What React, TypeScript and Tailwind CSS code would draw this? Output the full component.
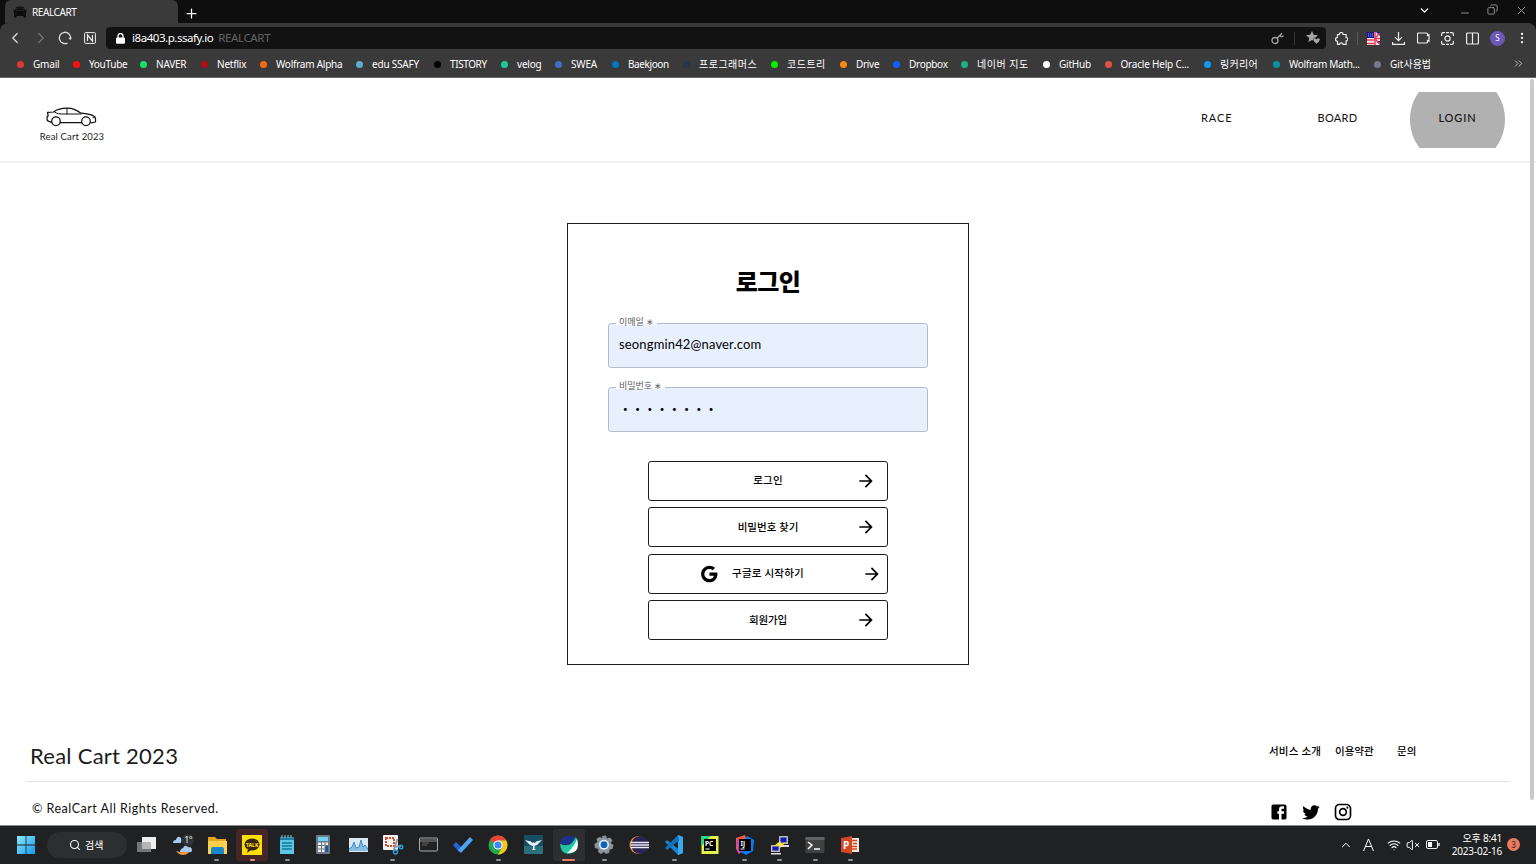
import React from "react";
import { ChevronLeft, ChevronRight, ChevronDown, ChevronUp, ChevronsRight, Copy, Minus, MoreVertical, Plus, Search, X, Wifi, VolumeX } from "lucide-react";

const ui = "font-['Noto_Sans','Noto_Sans_CJK_KR',sans-serif]";
const hand = "font-['Lato','Noto_Sans_CJK_KR',sans-serif]";

const bookmarks = [
  { name: "Gmail", dot: "bg-[#de3b30]", w: "w-[56px]", t: "tracking-[-0.2px]" },
  { name: "YouTube", dot: "bg-[#ff0c0c]", w: "w-[67px]", t: "tracking-[-0.3px]" },
  { name: "NAVER", dot: "bg-[#19e06a]", w: "w-[61px]", t: "tracking-[-0.2px]" },
  { name: "Netflix", dot: "bg-[#b20d14]", w: "w-[59px]", t: "tracking-[-0.2px]" },
  { name: "Wolfram Alpha", dot: "bg-[#f96a0a]", w: "w-[96px]", t: "tracking-[-0.25px]" },
  { name: "edu SSAFY", dot: "bg-[#5eadcf]", w: "w-[78px]", t: "tracking-[-0.2px]" },
  { name: "TISTORY", dot: "bg-black", w: "w-[67px]", t: "tracking-[-0.4px]" },
  { name: "velog", dot: "bg-[#20c997]", w: "w-[54px]", t: "tracking-[-0.2px]" },
  { name: "SWEA", dot: "bg-[#3f6fc4]", w: "w-[57px]", t: "tracking-[-0.2px]" },
  { name: "Baekjoon", dot: "bg-[#0076c0]", w: "w-[71px]", t: "tracking-[-0.4px]" },
  { name: "프로그래머스", dot: "bg-[#263747]", w: "w-[88px]", t: "tracking-[0.5px]" },
  { name: "코드트리", dot: "bg-[#02f202]", w: "w-[69px]", t: "tracking-[0.5px]" },
  { name: "Drive", dot: "bg-[#ff860d]", w: "w-[53px]", t: "tracking-[-0.3px]" },
  { name: "Dropbox", dot: "bg-[#0d61fe]", w: "w-[68px]", t: "tracking-[-0.3px]" },
  { name: "네이버 지도", dot: "bg-[#1bb184]", w: "w-[82px]", t: "tracking-[0.5px]" },
  { name: "GitHub", dot: "bg-white", w: "w-[61.5px]", t: "tracking-[-0.2px]" },
  { name: "Oracle Help C...", dot: "bg-[#e3523c]", w: "w-[99.5px]", t: "tracking-[-0.2px]" },
  { name: "링커리어", dot: "bg-[#0d97f8]", w: "w-[69px]", t: "tracking-[0.3px]" },
  { name: "Wolfram Math...", dot: "bg-[#0792a1]", w: "w-[101px]", t: "tracking-[-0.3px]" },
  { name: "Git사용법", dot: "bg-[#77768c]", w: "w-[70px]", t: "tracking-[0px]" },
];

function Car() {
  return (
    <svg className="h-[20px] w-[51px]" viewBox="0 0 51 20" fill="none" stroke="#111" strokeWidth="1.25" strokeLinejoin="round" strokeLinecap="round">
      <path d="M5.5 15.4 1.3 13.7 1 10l1.2-1.2-.7-3.4 6-.4C11 2.4 15 1.2 21 1.2c6.500 0 9.500 2 14 5 5 .5 10 1 12.800 2.800 1.700 1 2 3.200 1.700 6l-4.500.8M14.500 15.700h21" />
      <path d="M8.500 4.900C11 7 14 7 18 7h17M21 1.300V7M49 10l-2 .5" strokeWidth="1" />
      <circle cx="10" cy="14.200" r="4.300" /><circle cx="40" cy="14.200" r="4.300" />
    </svg>
  );
}

function Favicon() {
  return (
    <svg className="h-3 w-3.5" viewBox="0 0 14 12" fill="#0b0b0b">
      <path d="M3 1q4-1 8 0l1 3 1.500-.5v1.500L13 6v5.500h-2.500V10h-7v1.500H1V6L.5 5V3.500L2 4z" />
      <path d="M3.500 2h7l.7 2.500H2.800zM2 7l2 .5M12 7l-2 .5" stroke="#3f3f3f" strokeWidth=".5" />
    </svg>
  );
}

function BrowserChrome() {
  return (
    <header className={`flex h-[78px] shrink-0 flex-col bg-[#0e0e0e] text-white ${ui}`}>
      <div className="flex h-[23px] items-end pl-[5px]">
        <div className="flex h-[23px] w-[173px] items-center rounded-t-md bg-[#3a3a3a] pl-2">
          <Favicon />
          <span className="ml-[5px] text-[10px] leading-none tracking-[-0.4px]">REALCART</span>
        </div>
        <Plus className="mb-[2px] ml-[6px] size-[15px]" strokeWidth={2} />
        <div className="ml-auto flex h-[23px] items-start pr-[8px] pt-[4px] text-[#999]">
          <ChevronDown className="mr-[28px] size-[13px] text-white" strokeWidth={2.500} />
          <Minus className="mr-[16px] mt-[3px] size-[12px]" strokeWidth={1.800} />
          <Copy className="mr-[17px] size-[11px] -scale-x-100" strokeWidth={2} />
          <X className="size-[13px]" strokeWidth={1.700} />
        </div>
      </div>
      <div className="flex h-[55px] flex-col rounded-t-lg border-b border-[#666] bg-[#3a3a3a]">
        <div className="flex h-[30px] items-center pl-[6px]">
          <ChevronLeft className="size-[18px] text-[#ddd]" strokeWidth={1.600} />
          <ChevronRight className="ml-[8px] size-[18px] text-[#777]" strokeWidth={1.600} />
          <svg className="ml-[8px] size-[14px]" viewBox="0 0 14 14" fill="none" stroke="#ddd" strokeWidth="1.300"><path d="M9.500 12.100A5.700 5.700 0 1 1 12.700 7" /><path d="M10.300 6.800h3.700l-1.700 2.500z" fill="#ddd" stroke="none" /></svg>
          <svg className="ml-[12px] size-[12px]" viewBox="0 0 12 12" fill="none" stroke="#eee"><rect x=".6" y=".6" width="10.800" height="10.800" rx="1" /><path d="M3.500 9V3l5 6V3" strokeWidth="1.200" /></svg>
          <div className="ml-[10px] flex h-[22px] w-[1220px] items-center rounded-[4px] bg-[#121212] pl-[10px]">
            <svg className="h-[11px] w-[9px]" viewBox="0 0 9 11"><rect y="4.500" width="9" height="6.200" rx="1" fill="#fff" /><path d="M2 5V3a2.500 2.500 0 0 1 5 0v2" fill="none" stroke="#fff" strokeWidth="1.300" /></svg>
            <span className="ml-[7px] text-[11.500px] leading-none tracking-[-0.45px]">i8a403.p.ssafy.io</span>
            <span className="ml-[5px] text-[11.500px] leading-none tracking-[-0.35px] text-[#646464]">REALCART</span>
            <div className="ml-auto flex items-center pr-[6px] text-[#a5a5a5]">
              <svg className="size-[13px]" viewBox="0 0 13 13" fill="none" stroke="currentColor" strokeWidth="1.300"><circle cx="4" cy="8.500" r="3" /><path d="M6 6.300 11 1.200M9 3.200q1.500 3 3.500.5" /></svg>
              <span className="ml-[10px] h-[13px] w-px bg-[#333]" />
              <svg className="ml-[11px] size-[14px]" viewBox="0 0 14 14" fill="currentColor"><path d="m6 0 1.700 3.800 4.100.5-2 2.200q-3 .1-2.500 3.200L6 9l-3.600 2 .8-4L0 4.200l4.200-.4z" /><path d="M10.500 8.300q2.500-2 3.300 0 .3 2-3.300 4.400Q7.200 10.300 7.500 8.300q1-2 3 0z" /></svg>
            </div>
          </div>
          <svg className="ml-[9px] size-[13px]" viewBox="0 0 13 13" fill="none" stroke="#eee" strokeWidth="1.200"><path d="M2.500 2.500h2q0-2 1.800-2t1.800 2h3v3q0 0 .8.200 1 .5 1 1.500t-1 1.500q-.8.200-.8.200v3.500h-3q-.3-1.500-1.800-1.500t-1.800 1.500h-2v-3q-2-.3-2-2t2-2z" /></svg>
          <span className="ml-[9px] h-[13px] w-px bg-[#5a5a5a]" />
          <svg className="ml-[9px] size-[13px]" viewBox="0 0 13 13"><path fill="#f7e9ee" d="M0 0h13v13H0z" /><path fill="#18168f" d="M0 0h7v6H0zM9 0h4v4zM9 9h4v4z" /><path stroke="#e63c59" strokeWidth="1.500" d="M0 8h7M0 11.500h7M8 0v13M7 6.500h6M8 6l5-5M8 7l5 5" /><path stroke="#7aa6ee" strokeDasharray="1 1" d="M1 2h5M1 4h5" /></svg>
          <svg className="ml-[12px] size-[13px]" viewBox="0 0 13 13" fill="none" stroke="#eee" strokeWidth="1.200"><path d="M6.500 0v8.500M3 5.200l3.500 3.500L10 5.200M.6 10v2.400h11.800V10" /></svg>
          <svg className="ml-[12px] h-[12px] w-[13px]" viewBox="0 0 13 12" fill="none" stroke="#eee" strokeWidth="1.200"><path d="M1.500 1h8q1 0 1 1v1.500l1.500-.8v6.600l-1.500-.8V10q0 1-1 1h-8q-1 0-1-1V2q0-1 1-1z" /></svg>
          <svg className="ml-[11px] size-[13px]" viewBox="0 0 13 13" fill="none" stroke="#eee" strokeWidth="1.200"><path d="M.6 4V2q0-1.400 1.400-1.400h2M9 .6h2q1.400 0 1.400 1.400v2M12.400 9v2q0 1.400-1.400 1.400H9M4 12.400H2Q.6 12.400.6 11V9" /><circle cx="6.500" cy="6.500" r="2.600" /><path d="M5 .7h3M5 12.300h3" /></svg>
          <svg className="ml-[12px] size-[13px]" viewBox="0 0 13 13" fill="none" stroke="#eee" strokeWidth="1.200"><rect x=".6" y="1" width="11.800" height="11" rx="1" /><path d="M6.500 1v11" /></svg>
          <span className="ml-[11px] flex size-[15px] items-center justify-center rounded-full bg-[#6a58b8] text-[8px] leading-none">S</span>
          <MoreVertical className="ml-[10px] size-[14px] text-[#eee]" />
        </div>
        <nav className="flex h-[21px] items-center pl-[17px]">
          {bookmarks.map((b) => (
            <a key={b.name} className={`flex shrink-0 items-center whitespace-nowrap ${b.w}`}>
              <span className={`mt-px size-[7px] shrink-0 rounded-full ${b.dot}`} />
              <span className={`ml-[9px] text-[10px] leading-none ${b.t}`}>{b.name}</span>
            </a>
          ))}
          <ChevronsRight className="ml-auto mr-[11px] size-[13px] text-[#bbb]" strokeWidth={1.800} />
        </nav>
      </div>
    </header>
  );
}

function SiteHeader() {
  return (
    <div className="flex h-[85px] shrink-0 items-center justify-between border-b-2 border-[#eff1f1] pl-[40px] pr-[31px]">
      <div className="mt-[10px] flex w-[64px] flex-col items-center">
        <div className="flex -translate-x-px"><Car /></div>
        <span className="mt-1 whitespace-nowrap text-[9.500px] leading-[11px] tracking-[0.15px] text-[#222]">Real Cart 2023</span>
      </div>
      <nav className="flex h-[56px] items-center text-[11px] tracking-[0.900px] text-[#111]">
        <a className="mb-[2px] w-[116.500px]">RACE</a>
        <a className="mb-[2px] w-[92.500px] tracking-[0.3px]">BOARD</a>
        <a className="flex h-[56px] w-[95px] items-center justify-center overflow-hidden">
          <span className="flex size-[95px] shrink-0 items-center justify-center rounded-full bg-[#b1b1b1] pb-[2px] font-medium">LOGIN</span>
        </a>
      </nav>
    </div>
  );
}

function Field({ label, value, gap, mark }: { label: string; value: string; gap: string; mark: string }) {
  return (
    <label className="relative flex h-[45px] w-[320px] items-center rounded-[3px] border border-[#b1bccf] bg-[#e8f0fe] pl-[10px]">
      <span className={`absolute -top-[2px] left-[7px] h-[3px] bg-white ${gap}`} />
      <span className="absolute -top-[7px] left-[10px] flex gap-[2px] whitespace-nowrap text-[9px] leading-[10px] text-[#5c6067]">
        {label}
        <span>∗</span>
      </span>
      <span className={mark}>{value}</span>
    </label>
  );
}

function Arrow() {
  return <svg className="size-5" viewBox="0 0 24 24"><path d="m12 4-1.410 1.410L16.170 11H4v2h12.170l-5.580 5.590L12 20l8-8z" /></svg>;
}

const actions = [
  { text: "로그인", t: "tracking-[0.2px]" },
  { text: "비밀번호 찾기", t: "tracking-[0px]" },
  { text: "구글로 시작하기", t: "tracking-[0.2px]", google: true },
  { text: "회원가입", t: "tracking-[-0.1px]" },
];

function LoginCard() {
  return (
    <main className="mx-auto mt-[60px] flex h-[442px] w-[402px] shrink-0 flex-col items-center border border-[#1c1c1c] pt-[40px]">
      <h1 className="flex h-[36px] items-center text-[24px] font-black leading-none tracking-[-0.5px] text-black">로그인</h1>
      <div className="mt-[23px] flex flex-col gap-[19px] text-black">
        <Field label="이메일" value="seongmin42@naver.com" gap="w-[41px]" mark="pb-[1px] text-[13px] tracking-[0.15px]" />
        <Field label="비밀번호" value="••••••••" gap="w-[49px]" mark="pl-[4px] pb-[1px] text-[8px] tracking-[7.600px]" />
      </div>
      <div className="mt-[28.500px] flex flex-col gap-[6.500px] text-black">
        {actions.map((a) => (
          <button key={a.text} className="grid h-10 w-[240px] grid-cols-[52px_1fr_52px] items-center rounded-[3px] border border-[#1c1c1c] text-[10.500px] font-medium">
            <span className="flex justify-end">
              {a.google && <svg className="mr-[-18px] size-5 shrink-0" viewBox="0 0 24 24"><path d="M12.545 10.239v3.821h5.445c-.712 2.315-2.647 3.972-5.445 3.972a6.033 6.033 0 1 1 0-12.064c1.498 0 2.866.549 3.921 1.453l2.814-2.814A9.969 9.969 0 0 0 12.545 2C7.021 2 2.543 6.477 2.543 12s4.478 10 10.002 10c8.396 0 10.249-7.850 9.426-11.748z" /></svg>}
            </span>
            <span className={`text-center leading-none ${a.t}`}>{a.text}</span>
            <span className={a.google ? "flex justify-end pr-[5.500px]" : "flex justify-end pr-[11.500px]"}><Arrow /></span>
          </button>
        ))}
      </div>
    </main>
  );
}

function SiteFooter() {
  return (
    <footer className="mt-auto flex h-[89px] shrink-0 flex-col pl-[26px] pr-[26px] text-[#111]">
      <div className="flex h-[46px] items-center border-b border-[#e3e3e3] pb-[6px] pl-[4px]">
        <span className="whitespace-nowrap text-[22px] leading-none tracking-[0.25px] text-[#1c1c1c]">Real Cart 2023</span>
        <div className="ml-auto flex pb-[8px] text-[10.500px] font-medium leading-none text-black">
          <a className="w-[66px] tracking-[0.2px]">서비스 소개</a>
          <a className="w-[62px]">이용약관</a>
          <a className="w-[113px]">문의</a>
        </div>
      </div>
      <div className="flex items-center pl-[6px] pt-[14px]">
        <span className="pb-[1px] text-[12.500px] leading-[20px] tracking-[0.5px]">© RealCart All Rights Reserved.</span>
        <div className="ml-auto flex gap-[12px] pr-[157px] pt-[6px]">
          <svg className="size-5" viewBox="0 0 24 24"><path d="M5 3h14a2 2 0 0 1 2 2v14a2 2 0 0 1-2 2H5a2 2 0 0 1-2-2V5a2 2 0 0 1 2-2m13 2h-2.500A3.500 3.500 0 0 0 12 8.500V11h-2v3h2v7h3v-7h3v-3h-3V9a1 1 0 0 1 1-1h2V5z" /></svg>
          <svg className="size-5" viewBox="0 0 24 24"><path d="M22.460 6c-.77.35-1.600.58-2.460.69.88-.53 1.560-1.370 1.880-2.380-.83.5-1.750.85-2.720 1.050C18.370 4.500 17.260 4 16 4c-2.350 0-4.270 1.920-4.270 4.290 0 .34.04.67.11.98C8.280 9.090 5.110 7.380 3 4.790c-.37.63-.58 1.370-.58 2.150 0 1.490.75 2.810 1.910 3.560-.71 0-1.370-.2-1.950-.5v.03c0 2.080 1.480 3.820 3.440 4.210a4.220 4.220 0 0 1-1.930.07 4.280 4.280 0 0 0 4 2.980 8.521 8.521 0 0 1-5.330 1.840c-.34 0-.68-.02-1.020-.06C3.440 20.290 5.700 21 8.120 21 16 21 20.330 14.460 20.330 8.790c0-.19 0-.37-.01-.56.84-.6 1.560-1.360 2.140-2.230z" /></svg>
          <svg className="size-5" viewBox="0 0 24 24"><path d="M7.800 2h8.400C19.400 2 22 4.600 22 7.800v8.400a5.800 5.800 0 0 1-5.800 5.800H7.800C4.600 22 2 19.400 2 16.200V7.800A5.800 5.800 0 0 1 7.800 2m-.2 2A3.600 3.600 0 0 0 4 7.600v8.800C4 18.390 5.610 20 7.600 20h8.800a3.600 3.600 0 0 0 3.600-3.600V7.600C20 5.610 18.390 4 16.400 4H7.600m9.650 1.500a1.250 1.250 0 1 1 0 2.500 1.250 1.250 0 0 1 0-2.500M12 7a5 5 0 1 1 0 10 5 5 0 0 1 0-10m0 2a3 3 0 1 0 0 6 3 3 0 0 0 0-6z" /></svg>
        </div>
      </div>
    </footer>
  );
}

const label = "font-['Noto_Sans',sans-serif]";

const apps: { id: string; run?: "idle" | "hot" | "active"; art: React.ReactNode }[] = [
  { id: "views", art: <><path d="M0 7h14v10H0z" fill="#777" /><path d="M5 2h14v12H5z" fill="#eee" /><path d="M5 7h9v7H5z" fill="#b5b5b5" /></> },
  { id: "weather", art: <><path d="M8 17q8 1 11-6-1 9-8 9-4 0-7-4z" fill="#f0983a" /><path d="M1 8q0-3 3-3 1-4 4-3 2 1 1 6zM8 17q0-3 3-4 2-4 5-1 4 0 4 3t-3 2z" fill="#a9c8f2" /><circle cx="16" cy="5" r="6" fill="#303338" /><text x="12.500" y="8" fontSize="8" fill="#fff" className={label}>1°</text></> },
  { id: "files", run: "idle", art: <><path d="M1 2h7l2 2h9v14H1z" fill="#e6a51b" /><path d="M1 6h19v13H1z" fill="#ffd04d" /><path d="M4 19v-5q0-2 2-2h9q2 0 2 2v5z" fill="#1986c9" /></> },
  { id: "talk", run: "hot", art: <><path d="M0 0h20v20H0z" fill="#f9e000" /><ellipse cx="10" cy="9.500" rx="7.500" ry="6" fill="#3a2310" /><path d="m6 14-1 4 4-3z" fill="#3a2310" /><text x="4" y="11.500" fontSize="5" fontWeight="800" fill="#f9e000" className={label}>TALK</text></> },
  { id: "notes", run: "idle", art: <><path d="M3 2h14v17H3z" fill="#5cc8e4" /><path d="M3 2h14v3H3z" fill="#207ea3" /><path d="M5 8h10M5 11h10M5 14h10" stroke="#17799b" strokeWidth="1.400" /><path d="M5 0v3M8 0v3M11 0v3M14 0v3" stroke="#8ed3e5" /></> },
  { id: "calc", art: <><rect x="3" y="0" width="14" height="19" rx="1" fill="#6d7a85" /><path d="M5 2h10v4H5z" fill="#70d3f4" /><path d="M5 7.500h3V10H5zM9 7.500h2.500V10H9zM5 11h3v2.500H5zM9 11h2.500v2.500H9zM5 14.500h3V17H5zM9 14.500h2.500V17H9zM12.500 7.500H15V10h-2.500z" fill="#eee" /><path d="M12.500 11H15v6h-2.500z" fill="#1658a0" /></> },
  { id: "monitor", art: <><path d="M1 3h19v14H1z" fill="#dce9f3" /><path d="m1 14 3-2 2-5 2 6 3-1 2-7 2 7 2-2 3 4v2H1z" fill="#86bce0" /><path d="m1 14 3-2 2-5 2 6 3-1 2-7 2 7 2-2 3 4" fill="none" stroke="#3a8dc8" /></> },
  { id: "snip", run: "idle", art: <><rect x="0" y="0" width="15" height="15" rx="1" fill="#f2f2f2" /><path d="M3 3h8v8H3z" fill="none" stroke="#d64a31" strokeWidth="2" strokeDasharray="2 1" /><path d="m10.500 16 4-12M11 12l7-1" stroke="#999" strokeWidth="2" /><circle cx="12.500" cy="17" r="2" fill="none" stroke="#29a0dd" strokeWidth="1.500" /><circle cx="18" cy="12" r="1.800" fill="none" stroke="#29a0dd" strokeWidth="1.400" /></> },
  { id: "cmd", art: <><rect x="1.500" y="3" width="18" height="13" rx="1" fill="#222" stroke="#aaa" /><path d="M2 4h17v3H2z" fill="#555" /><path d="M4 8h7M4 10h5" stroke="#777" strokeWidth=".8" /></> },
  { id: "todo", art: <><path d="m0 10 3-3 6 6-3 4z" fill="#2564cf" /><path d="M5 15 17 2l3 3L8 18z" fill="#4aa5f2" /></> },
  { id: "chrome", run: "idle", art: <><circle cx="10" cy="10" r="9.500" fill="#22a753" /><path d="M10 10 1.800 5.300A9.500 9.500 0 0 1 18.300 5.500H10z" fill="#e94335" /><path d="M10 10V5.500h8.300A9.500 9.500 0 0 1 10 19.500l4-7z" fill="#fbc518" /><circle cx="10" cy="10" r="4.600" fill="#fff" /><circle cx="10" cy="10" r="3.600" fill="#4285f4" /></> },
  { id: "bird", art: <><path d="M0 0h19v19H0z" fill="#174c66" /><path d="M0 11h19v8H0z" fill="#38868a" opacity=".6" /><path d="m1 5 6 1.500L8.500 8l1-.8L11 8l1-1.500L18 5l-5 5-2.500 1v3l1.500 1H7.500L9 14v-3l-3-1z" fill="#e4f4f4" /></> },
  { id: "whale", run: "active", art: <><path d="M1 8q2 3 7 2Q13 7 17 2q3 5 1 10-3 7-9 7-8-1-8-11z" fill="#20c6a2" /><path d="M1 9Q1 2 8 1q5-1 8 2-2 5-6 7Q3 8 1 9z" fill="#1b338c" /><path d="M18 4q4 15-10 14 7-6 10-14z" fill="#eefbf7" /></> },
  { id: "settings", run: "idle", art: <><path d="m8 1 4-.5 1 3 3-1 2.500 3-2 2.500 3 2-1 4-3 .5v3L12 19l-2-2-3 2-3-2 .5-3-3.500-1-.5-4 3-2-1-3 3-2 3 1z" fill="#8b949c" /><circle cx="10" cy="9.700" r="5" fill="#e8edf1" /><circle cx="10" cy="9.700" r="3.400" fill="#0e65b8" /></> },
  { id: "eclipse", art: <><circle cx="9.500" cy="10" r="9" fill="#f29a31" /><circle cx="11" cy="10" r="9" fill="#2b2255" /><path d="M2 7.500h18M2 10h18M2 12.500h18" stroke="#ece9f8" strokeWidth="1.300" /></> },
  { id: "code", run: "idle", art: <><path d="m14 0 5 2v16l-5 2L1 7l2-2 12 9.500z" fill="#1684cf" /><path d="m14 0 5 2v16l-5 2z" fill="#38a8f1" /><path d="M15 5.500 3 15l-2-2L14 0z" fill="#1173b9" /></> },
  { id: "pycharm", art: <><path d="M1.500 1h17v18h-17z" fill="#e5f04b" /><path d="M1.500 1h9l-9 10z" fill="#25d789" /><path d="M4 4h12v12H4z" fill="#000" /><path d="M5.500 14h4" stroke="#fff" /><text x="5" y="10.500" fontSize="6.500" fontWeight="700" fill="#fff" className={label}>PC</text></> },
  { id: "intellij", run: "idle", art: <><path d="m1 3 9-3 3 9-9 10-3-5z" fill="#f15b3b" /><path d="m12 1 7 4-1 11-7 4-7-4z" fill="#087cfa" /><path d="m1 8 3-6 3 15-4 1z" fill="#cb47ba" /><path d="M4 4h12v12H4z" fill="#000" /><path d="M5.500 14h4" stroke="#fff" /><text x="5.500" y="10.500" fontSize="6.500" fontWeight="700" fill="#fff" className={label}>IJ</text></> },
  { id: "putty", run: "idle", art: <><path d="M9 1h9v8H9zM1 10h9v7H1z" fill="#bbb" /><path d="M10.500 2.500h6v5h-6zM2.500 11.500h6v4h-6z" fill="#1515bb" /><path d="M11 10h8v2h-8zM1 18h10v1.500H1z" fill="#ddd" /><path d="m4 11 6-5 1 3 5-2-6 6-1-3z" fill="#ffe82b" /></> },
  { id: "terminal", run: "idle", art: <><rect x=".5" y="2" width="19" height="16" rx="1" fill="#414141" /><path d="M.5 2h19v3H.5z" fill="#626262" /><path d="m3 7 4 3-4 4M9 14h6" fill="none" stroke="#fff" strokeWidth="1.500" /></> },
  { id: "slides", run: "idle", art: <><path d="M9 3h10v14H9z" fill="#f7e5df" /><path d="M12 5.500h5M12 11.500h5M12 14h5M13 8.500h4" stroke="#d24726" strokeWidth="1.400" /><path d="m1 3 11-2v18L1 17z" fill="#d24726" /><text x="3" y="13.500" fontSize="10" fontWeight="700" fill="#fff" className={label}>P</text></> },
];

const cell = { none: "", idle: "", hot: "rounded-[3px] bg-[#462527]", active: "rounded-[3px] bg-[#2d2e30]" };
const bar = { none: "w-0", idle: "w-[5px] bg-[#929292]", hot: "w-[5px] bg-[#ee8b93]", active: "w-[13px] bg-[#ee7c61]" };

function Taskbar() {
  return (
    <div className={`flex h-[39px] shrink-0 items-center border-t border-[#8a8a8a] bg-[#202122] pb-[1px] pl-[17px] text-white ${ui}`}>
      <svg className="size-[18px]" viewBox="0 0 18 18"><defs><linearGradient id="w" x2="1" y2="1"><stop stopColor="#8ce9ff" /><stop offset="1" stopColor="#1599ea" /></linearGradient></defs><path fill="url(#w)" d="M0 0h8.600v8.600H0zM9.400 0H18v8.600H9.400zM0 9.400h8.600V18H0zM9.400 9.400H18V18H9.400z" /></svg>
      <div className="ml-[12px] flex h-[26px] w-[80px] items-center rounded-full bg-[#2d2e2f] pl-[22px]">
        <Search className="size-[12px]" strokeWidth={2.200} />
        <span className="ml-[4px] text-[10px] leading-none">검색</span>
      </div>
      <div className="ml-[2px] flex h-full items-center">
        {apps.map((a) => (
          <div key={a.id} className="flex w-[35.200px] justify-center">
            <div className={`flex h-[32px] w-[32px] flex-col items-center justify-between pt-[6px] ${cell[a.run ?? "none"]}`}>
              <svg className="size-5 overflow-visible" viewBox="0 0 20 20">{a.art}</svg>
              <span className={`h-[2px] rounded-full ${bar[a.run ?? "none"]}`} />
            </div>
          </div>
        ))}
      </div>
      <div className="ml-auto flex items-center pr-[16px]">
        <ChevronUp className="size-[14px]" strokeWidth={1.700} />
        <svg className="ml-[10px] h-[13px] w-[11px]" viewBox="0 0 11 13" fill="none" stroke="#fff"><path d="M.5 13 5.500 1l5 12M2.500 8.500h6" /></svg>
        <Wifi className="ml-[13px] size-[14px]" strokeWidth={1.800} />
        <VolumeX className="ml-[5px] size-[14px]" strokeWidth={1.700} />
        <svg className="ml-[6px] h-[9px] w-[14px]" viewBox="0 0 14 9" fill="none" stroke="#eee"><rect x=".5" y=".5" width="11" height="8" rx="1.500" /><path d="M13 3v3" strokeWidth="1.500" /><path d="M2 2h4v5H2z" fill="#fff" stroke="none" /></svg>
        <div className="ml-[10px] w-[52px] text-right text-[10px] leading-[12.500px] tracking-[-0.2px]">
          <div className="whitespace-nowrap">오후 8:41</div>
          <div className="whitespace-nowrap">2023-02-16</div>
        </div>
        <span className="ml-[5px] flex size-[13px] items-center justify-center rounded-full bg-[#ee7961] text-[8px] leading-none text-[#222]">3</span>
      </div>
    </div>
  );
}

export default function App() {
  return (
    <div className="flex h-[864px] w-[1536px] flex-col overflow-hidden bg-white">
      <BrowserChrome />
      <div className={`relative flex h-[747px] shrink-0 flex-col bg-white ${hand}`}>
        <SiteHeader />
        <LoginCard />
        <SiteFooter />
        <div className="absolute right-[2px] top-[1px] h-[721px] w-[4px] rounded-full bg-[#c9c9c9]" />
      </div>
      <Taskbar />
    </div>
  );
}
